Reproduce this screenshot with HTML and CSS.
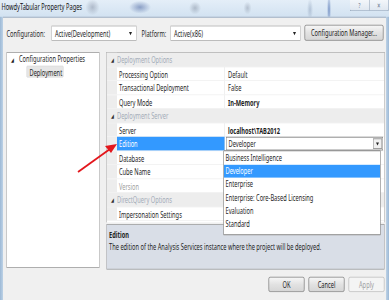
FILE: index.html
```html
<html>
	<head>
		<title>HowdyTabular Property Pages</title>
		<link rel="stylesheet" href="styles.css">
	</head>
	<body>
		<div class="screen">
		<div class="window">
			<div class="titlebar">
				<span class="title">HowdyTabular Property Pages</span>
				<div class="caption">
					<span class="cap-btn">?</span>
					<span class="cap-btn">✕</span>
				</div>
			</div>
			<div class="client">
				<div class="config-row">
					<span class="lbl">Configuration:</span>
					<div class="combo cfg">Active(Development)<i class="tri"></i></div>
					<span class="lbl plat">Platform:</span>
					<div class="combo platform">Active(x86)<i class="tri"></i></div>
					<div class="btn manager">Configuration Manager...</div>
				</div>
				<div class="main">
					<div class="tree">
						<div class="tree-row"><span class="exp">◢</span>Configuration Properties</div>
						<div class="tree-row sel">Deployment</div>
					</div>
					<div class="right">
						<div class="grid">
							<div class="row cat"><span class="margin">◢</span>Deployment Options</div>
							<div class="row"><span class="margin"></span><span class="name">Processing Option</span><span class="value">Default</span></div>
							<div class="row"><span class="margin"></span><span class="name">Transactional Deployment</span><span class="value">False</span></div>
							<div class="row"><span class="margin"></span><span class="name">Query Mode</span><span class="value bold">In-Memory</span></div>
							<div class="row cat"><span class="margin">◢</span>Deployment Server</div>
							<div class="row"><span class="margin"></span><span class="name">Server</span><span class="value bold">localhost\TAB2012</span></div>
							<div class="row"><span class="margin"></span><span class="name picked">Edition</span><span class="value"><span class="edit">Developer<span class="drop"><i class="tri"></i></span></span></span></div>
							<div class="row"><span class="margin"></span><span class="name">Database</span><span class="value"></span></div>
							<div class="row"><span class="margin"></span><span class="name">Cube Name</span><span class="value"></span></div>
							<div class="row"><span class="margin"></span><span class="name muted">Version</span><span class="value"></span></div>
							<div class="row cat"><span class="margin">◢</span>DirectQuery Options</div>
							<div class="row"><span class="margin"></span><span class="name">Impersonation Settings</span><span class="value"></span></div>
							<div class="list">
								<div class="item">Business Intelligence</div>
								<div class="item on">Developer</div>
								<div class="item">Enterprise</div>
								<div class="item">Enterprise: Core-Based Licensing</div>
								<div class="item">Evaluation</div>
								<div class="item">Standard</div>
							</div>
						</div>
						<div class="desc">
							<div class="desc-title">Edition</div>
							<div>The edition of the Analysis Services instance where the project will be deployed.</div>
						</div>
					</div>
				</div>
				<div class="buttons">
					<div class="btn">OK</div>
					<div class="btn">Cancel</div>
					<div class="btn off">Apply</div>
				</div>
			</div>
		</div>
		</div>
		<svg class="arrow" width="389" height="300" viewBox="0 0 389 300">
			<line x1="78" y1="172" x2="110" y2="149" stroke="#e3161c" stroke-width="1.8"/>
			<polygon points="117,144 105,146 111,153" fill="#e3161c"/>
		</svg>
	</body>
</html>
```

FILE: styles.css
```css
html, body {
	margin: 0;
	overflow: hidden;
	background: #a9c4de;
}
.screen {
	width: 389px;
	height: 300px;
	overflow: hidden;
}
/* the whole dialog is drawn at double width and then squeezed, like the shot */
.window {
	width: 778px;
	height: 375px;
	transform: scale(0.5, 0.8);
	transform-origin: 0 0;
	display: flex;
	flex-direction: column;
	font: 11.4px "Noto Sans", "Open Sans", sans-serif;
	color: #1e1e1e;
	background: linear-gradient(to right, #9db9d6, #bdd2e6 6px, #bdd2e6 772px, #9db9d6);
}
.titlebar {
	height: 21px;
	display: flex;
	align-items: flex-start;
	background:
		radial-gradient(ellipse 14px 10px at 185px 9px, rgba(120,130,150,0.45), transparent),
		radial-gradient(ellipse 22px 8px at 280px 9px, rgba(40,70,140,0.45), transparent),
		radial-gradient(ellipse 12px 8px at 390px 10px, rgba(90,100,120,0.35), transparent),
		radial-gradient(ellipse 8px 8px at 495px 10px, rgba(90,100,120,0.3), transparent),
		radial-gradient(ellipse 6px 14px at 620px 12px, rgba(120,140,170,0.4), transparent),
		radial-gradient(ellipse 4px 20px at 658px 12px, rgba(40,80,160,0.55), transparent),
		linear-gradient(#e4eef8, #d2e2f1);
}
.title {
	margin: 1px 0 0 3px;
	color: #111;
}
.caption {
	margin-left: auto;
	display: flex;
	height: 13px;
	border: 1px solid #8a9cb2;
	border-top: none;
	border-radius: 0 0 3px 3px;
	background: linear-gradient(#f3f6fa, #dfe7f0);
}
.cap-btn {
	width: 38px;
	text-align: center;
	font-size: 9px;
	line-height: 13px;
	color: #6a7a8e;
}
.cap-btn + .cap-btn {
	border-left: 1px solid #8a9cb2;
}
.client {
	flex: 1;
	margin: 0 6px;
	padding: 9px 3px 0 7px;
	background: #f0f0f0;
	border-top: 1px solid #8aa0b8;
}
.config-row {
	display: flex;
	height: 20px;
	align-items: center;
}
.lbl {
	width: 90px;
}
.lbl.plat {
	width: 58px;
	margin-left: 10px;
}
.combo {
	position: relative;
	height: 19px;
	line-height: 18px;
	padding-left: 6px;
	box-sizing: border-box;
	border: 1px solid #acacac;
	background: #fff;
}
.combo.cfg {
	width: 170px;
}
.combo.platform {
	width: 260px;
}
.tri {
	position: absolute;
	right: 8px;
	top: 7px;
	border-left: 3px solid transparent;
	border-right: 3px solid transparent;
	border-top: 4px solid #222;
}
.btn {
	width: 72px;
	height: 19px;
	line-height: 18px;
	box-sizing: border-box;
	text-align: center;
	border: 1px solid #707070;
	border-radius: 3px;
	background: linear-gradient(#f6f6f6, #e2e2e2 50%, #d6d6d6);
}
.btn.manager {
	width: 158px;
	height: 20px;
	margin-left: 8px;
}
.btn.off {
	color: #a0a0a0;
	border-color: #b5b5b5;
	background: #f4f4f4;
}
.main {
	display: flex;
	margin-top: 14px;
}
.tree {
	width: 186px;
	height: 270px;
	box-sizing: border-box;
	border: 1px solid #9a9a9a;
	background: #fff;
}
.tree-row {
	height: 15px;
	line-height: 15px;
	padding-left: 8px;
}
.tree-row .exp {
	display: inline-block;
	width: 16px;
	font-size: 7px;
}
.tree-row.sel {
	margin: 1px 0 0 39px;
	width: 74px;
	padding-left: 5px;
	box-sizing: border-box;
	background: #e6e6e6;
	border: 1px solid #d9d9d9;
	border-radius: 2px;
}
.right {
	margin-left: 14px;
	width: 556px;
}
.grid {
	position: relative;
	height: 213px;
	box-sizing: border-box;
	border: 1px solid #a0a0a0;
	border-bottom: none;
	background: #fff;
}
.row {
	display: flex;
	height: 17.5px;
	line-height: 17px;
	box-sizing: border-box;
	border-bottom: 1px solid #f0f0f0;
}
.row.cat {
	background: #ededed;
	color: #a3acb8;
}
.margin {
	width: 20px;
	flex: none;
	background: #ededed;
	text-align: center;
	font-size: 7px;
	color: #333;
}
.name {
	width: 216px;
	padding-left: 4px;
	box-sizing: border-box;
	border-right: 1px solid #e0e0e0;
}
.name.picked {
	background: #3399ff;
	color: #fff;
}
.name.muted {
	color: #a0a0a0;
}
.value {
	flex: 1;
	padding-left: 6px;
}
.bold {
	font-weight: bold;
}
.edit {
	position: relative;
	display: block;
	margin-left: -4px;
	width: 314px;
	padding-left: 4px;
	box-sizing: border-box;
	border: 1px solid #7a7a7a;
	height: 17px;
	line-height: 15px;
}
.drop {
	position: absolute;
	right: 1px;
	top: 1px;
	width: 18px;
	height: 13px;
	border: 1px solid #8a8a8a;
	box-sizing: border-box;
	background: #f0f0f0;
}
.drop .tri {
	right: 5px;
	top: 4px;
}
.list {
	position: absolute;
	left: 233px;
	top: 122px;
	width: 314px;
	height: 106px;
	box-sizing: border-box;
	border: 1px solid #646464;
	background: #fff;
}
.item {
	height: 16.5px;
	line-height: 16px;
	padding-left: 3px;
}
.item.on {
	background: #3399ff;
	color: #fff;
}
.desc {
	margin-top: 1.5px;
	height: 57px;
	box-sizing: border-box;
	padding: 4px 4px;
	background: #d9dee7;
	border: 1px solid #a0a0a0;
	line-height: 16px;
}
.desc-title {
	font-weight: bold;
}
.buttons {
	display: flex;
	justify-content: flex-end;
	gap: 8px;
	margin-top: 9px;
}
.arrow {
	position: absolute;
	left: 0;
	top: 0;
	pointer-events: none;
}
```
